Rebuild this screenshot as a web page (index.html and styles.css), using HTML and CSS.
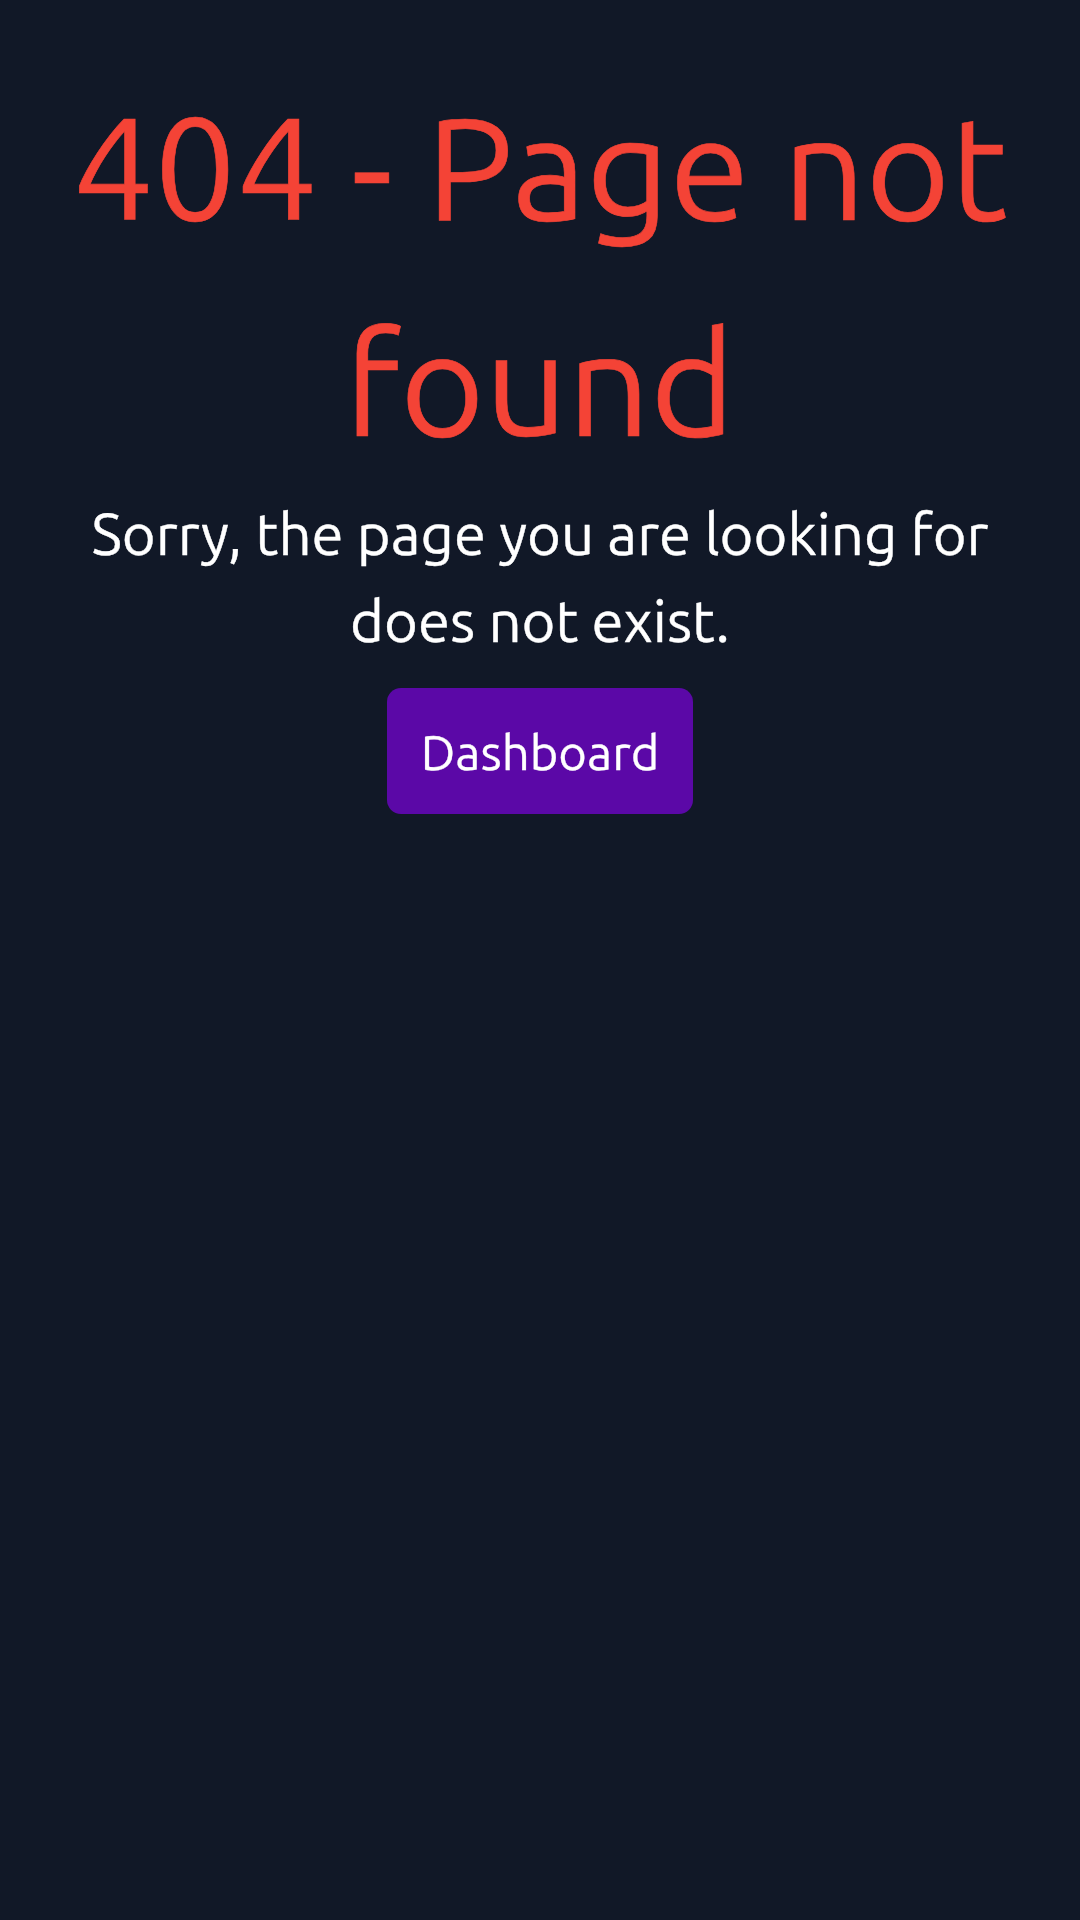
FILE: index.html
```html
<!DOCTYPE html>
<html lang="en">
<head>
<meta charset="utf-8">
<title>404 - Page not found</title>
<link rel="stylesheet" href="styles.css">
</head>
<body>
<main class="page">
  <h1 class="title">404 - Page not found</h1>
  <p class="message">Sorry, the page you are looking for does not exist.</p>
  <a class="button" href="#">Dashboard</a>
</main>
</body>
</html>
```
FILE: styles.css
```css
html, body {
  margin: 0;
  padding: 0;
  background: #111827;
  min-height: 100%;
}
body {
  font-family: "Ubuntu", "Open Sans", "Noto Sans", sans-serif;
  color: #ffffff;
  height: 1920px;
}
.page {
  display: flex;
  flex-direction: column;
  align-items: center;
  text-align: center;
  padding: 58px 60px 0;
}
.title {
  margin: 0;
  font-size: 145px;
  line-height: 216px;
  font-weight: 400;
  color: #f44336;
  -webkit-text-stroke: 0.6px #f44336;
}
.message {
  margin: 0;
  font-size: 58px;
  line-height: 87px;
  -webkit-text-stroke: 0.4px #ffffff;
}
.button {
  margin-top: 24px;
  display: flex;
  align-items: center;
  justify-content: center;
  width: 306px;
  height: 126px;
  box-sizing: border-box;
  border-radius: 14px;
  background: #5b08a7;
  color: #ffffff;
  text-decoration: none;
  font-size: 49px;
  -webkit-text-stroke: 0.3px #ffffff;
}
```
